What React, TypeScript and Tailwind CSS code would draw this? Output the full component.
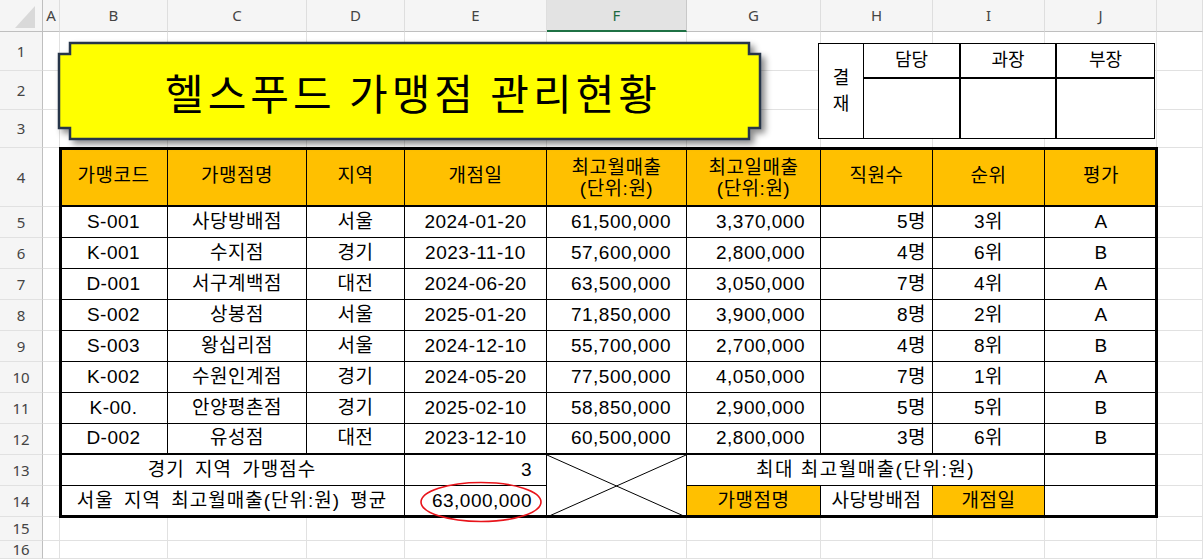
const cellFont = "font-['Liberation_Sans','Noto_Sans_CJK_KR',sans-serif]";
const krFont = "font-['Noto_Sans_CJK_KR',sans-serif]";
const uiFont = "font-['Noto_Sans','Liberation_Sans',sans-serif]";

const colStarts = [
  "col-start-1", "col-start-2", "col-start-3", "col-start-4", "col-start-5", "col-start-6",
  "col-start-7", "col-start-8", "col-start-9", "col-start-10", "col-start-11", "col-start-12",
];
const rowStarts = [
  "row-start-1", "row-start-2", "row-start-3", "row-start-4", "row-start-5", "row-start-6",
  "row-start-7", "row-start-8", "row-start-9", "row-start-10", "row-start-11", "row-start-12",
  "row-start-13", "row-start-14", "row-start-15", "row-start-16", "row-start-17",
];

const colLetters = ["A", "B", "C", "D", "E", "F", "G", "H", "I", "J", ""];
const rowNumbers = Array.from({ length: 16 }, (_, i) => i + 1);

const stores = [
  { code: "S-001", name: "사당방배점", region: "서울", opened: "2024-01-20", monthly: "61,500,000", daily: "3,370,000", staff: "5명", rank: "3위", grade: "A" },
  { code: "K-001", name: "수지점", region: "경기", opened: "2023-11-10", monthly: "57,600,000", daily: "2,800,000", staff: "4명", rank: "6위", grade: "B" },
  { code: "D-001", name: "서구계백점", region: "대전", opened: "2024-06-20", monthly: "63,500,000", daily: "3,050,000", staff: "7명", rank: "4위", grade: "A" },
  { code: "S-002", name: "상봉점", region: "서울", opened: "2025-01-20", monthly: "71,850,000", daily: "3,900,000", staff: "8명", rank: "2위", grade: "A" },
  { code: "S-003", name: "왕십리점", region: "서울", opened: "2024-12-10", monthly: "55,700,000", daily: "2,700,000", staff: "4명", rank: "8위", grade: "B" },
  { code: "K-002", name: "수원인계점", region: "경기", opened: "2024-05-20", monthly: "77,500,000", daily: "4,050,000", staff: "7명", rank: "1위", grade: "A" },
  { code: "K-00.", name: "안양평촌점", region: "경기", opened: "2025-02-10", monthly: "58,850,000", daily: "2,900,000", staff: "5명", rank: "5위", grade: "B" },
  { code: "D-002", name: "유성점", region: "대전", opened: "2023-12-10", monthly: "60,500,000", daily: "2,800,000", staff: "3명", rank: "6위", grade: "B" },
];

function StoreTable() {
  const last = stores.length - 1;
  return (
    <div
      className={`col-start-3 col-end-12 row-start-5 row-end-16 grid grid-cols-[108px_139px_98px_142px_140px_134px_112px_112px_112px] grid-rows-[59px_repeat(10,31px)] bg-white text-black text-[19px] tracking-[0.5px] outline-3 -outline-offset-2 outline-black ${cellFont}`}
    >
      {/* header */}
      {["가맹코드", "가맹점명", "지역", "개점일"].map((h) => (
        <div key={h} className="flex items-center justify-center bg-[#ffc000] border-r border-b-2 border-black">
          {h}
        </div>
      ))}
      {["최고월매출", "최고일매출"].map((h) => (
        <div key={h} className="flex flex-col items-center justify-center bg-[#ffc000] border-r border-b-2 border-black leading-[21px] pt-[2px]">
          <span>{h}</span>
          <span>(단위:원)</span>
        </div>
      ))}
      <div className="flex items-center justify-center bg-[#ffc000] border-r border-b-2 border-black">직원수</div>
      <div className="flex items-center justify-center bg-[#ffc000] border-r border-b-2 border-black">순위</div>
      <div className="flex items-center justify-center bg-[#ffc000] border-b-2 border-black">평가</div>

      {/* rows */}
      {stores.map((s, i) => {
        const b = i === last ? "border-b-2" : "border-b";
        return [
          <div key={s.code + i + "a"} className={`flex items-center justify-center border-r ${b} border-black`}>{s.code}</div>,
          <div key={s.code + i + "b"} className={`flex items-center justify-center border-r ${b} border-black`}>{s.name}</div>,
          <div key={s.code + i + "c"} className={`flex items-center justify-center border-r ${b} border-black`}>{s.region}</div>,
          <div key={s.code + i + "d"} className={`flex items-center justify-center border-r ${b} border-black`}>{s.opened}</div>,
          <div key={s.code + i + "e"} className={`flex items-center justify-end pr-[15px] border-r ${b} border-black`}>{s.monthly}</div>,
          <div key={s.code + i + "f"} className={`flex items-center justify-end pr-[15px] border-r ${b} border-black`}>{s.daily}</div>,
          <div key={s.code + i + "g"} className={`flex items-center justify-end pr-[6px] border-r ${b} border-black`}>{s.staff}</div>,
          <div key={s.code + i + "h"} className={`flex items-center justify-center border-r ${b} border-black`}>{s.rank}</div>,
          <div key={s.code + i + "i"} className={`flex items-center justify-center ${b} border-black`}>{s.grade}</div>,
        ];
      })}

      {/* row 13 */}
      <div className="col-span-3 flex items-center justify-center border-r border-b border-black tracking-[1px] [word-spacing:4px]">
        경기 지역 가맹점수
      </div>
      <div className="flex items-center justify-end pr-[14px] border-r border-b border-black">3</div>
      <div className="row-span-2 border-r border-black">
        <svg className="w-full h-full" viewBox="0 0 100 100" preserveAspectRatio="none">
          <line x1="0" y1="0" x2="100" y2="100" stroke="#000" strokeWidth="1" vectorEffect="non-scaling-stroke" />
          <line x1="0" y1="100" x2="100" y2="0" stroke="#000" strokeWidth="1" vectorEffect="non-scaling-stroke" />
        </svg>
      </div>
      <div className="col-span-3 flex items-center justify-center border-r border-b border-black tracking-[1.5px]">
        최대 최고월매출(단위:원)
      </div>
      <div className="border-b border-black" />

      {/* row 14 */}
      <div className="col-span-3 flex items-center justify-center border-r border-black tracking-[1px] [word-spacing:4px]">
        서울 지역 최고월매출(단위:원) 평균
      </div>
      <div className="relative flex items-center justify-end pr-[14px] border-r border-black">
        63,000,000
        <svg className="absolute left-0 top-0 overflow-visible pointer-events-none" width="142" height="31">
          <ellipse cx="76" cy="16" rx="60" ry="19.5" fill="none" stroke="#e8141b" strokeWidth="1.6" />
        </svg>
      </div>
      <div className="flex items-center justify-center bg-[#ffc000] border-r border-black">가맹점명</div>
      <div className="flex items-center justify-center border-r border-black">사당방배점</div>
      <div className="flex items-center justify-center bg-[#ffc000] border-r border-black">개점일</div>
      <div />
    </div>
  );
}

function TitleShape() {
  return (
    <div className="absolute left-[59px] top-[43px] w-[702px] h-[96px] flex items-center justify-center">
      <svg className="absolute left-[-4px] top-[-4px] overflow-visible" width="718" height="112">
        <defs>
          <filter id="shade" x="-5%" y="-20%" width="110%" height="150%">
            <feDropShadow dx="4" dy="4" stdDeviation="3" floodColor="#000" floodOpacity="0.45" />
          </filter>
        </defs>
        <path
          d="M15 4 H694 V15 H705 V89 H694 V100 H15 V89 H4 V15 H15 Z"
          fill="#ffff00"
          stroke="#263548"
          strokeWidth="2.5"
          filter="url(#shade)"
        />
      </svg>
      <span className={`relative text-[42px] leading-none text-black tracking-[4px] pl-[6px] pt-[2px] ${krFont}`}>
        헬스푸드 가맹점 관리현황
      </span>
    </div>
  );
}

function ApprovalBox() {
  return (
    <div
      className={`absolute left-[818px] top-[43px] w-[337px] h-[96px] grid grid-cols-[45px_97px_96px_97px] grid-rows-[35px_59px] border border-black bg-white text-[18px] text-black ${cellFont}`}
    >
      <div className="row-span-2 flex flex-col items-center justify-center border-r border-black leading-[26px]">
        <span>결</span>
        <span>재</span>
      </div>
      <div className="flex items-center justify-center border-r-2 border-b-2 border-black">담당</div>
      <div className="flex items-center justify-center border-r-2 border-b-2 border-black">과장</div>
      <div className="flex items-center justify-center border-b-2 border-black">부장</div>
      <div className="border-r-2 border-black" />
      <div className="border-r-2 border-black" />
      <div />
    </div>
  );
}

export default function App() {
  return (
    <div className="w-[1203px] h-[559px] overflow-hidden bg-white">
      <div className="relative grid grid-cols-[43px_17px_108px_139px_98px_142px_140px_134px_112px_112px_112px_46px] grid-rows-[32px_39px_39px_38px_59px_repeat(10,31px)_24px_18px]">
        {/* corner */}
        <div className="col-start-1 row-start-1 flex items-end justify-end pr-[7px] pb-[3px] bg-[#f5f5f5] border-r border-b border-[#bfbfbf]">
          <svg width="20" height="22" viewBox="0 0 20 22">
            <path d="M0 22 L20 22 L20 0 Z" fill="#d9d9d9" />
          </svg>
        </div>

        {/* column letters */}
        {colLetters.map((l, i) => (
          <div
            key={"c" + i}
            className={`${colStarts[i + 1]} row-start-1 flex items-center justify-center text-[15px] ${uiFont} ${
              l === "F"
                ? "bg-[#e3e3e3] text-[#1d6b3f] border-r border-[#c8c8c8] border-b-2 border-b-[#1e7145]"
                : "bg-[#f5f5f5] text-[#444] border-r border-[#dedede] border-b border-b-[#bfbfbf]"
            }`}
          >
            {l}
          </div>
        ))}

        {/* row numbers */}
        {rowNumbers.map((n) => (
          <div
            key={"r" + n}
            className={`col-start-1 ${rowStarts[n]} flex items-center justify-center bg-[#f5f5f5] text-[15px] leading-none text-[#444] border-r border-r-[#bfbfbf] border-b border-b-[#e1e1e1] ${uiFont}`}
          >
            {n}
          </div>
        ))}

        {/* gridlines */}
        {rowNumbers.map((n) =>
          colLetters.map((_, c) => (
            <div key={n + "-" + c} className={`${colStarts[c + 1]} ${rowStarts[n]} border-r border-b border-[#e1e1e1]`} />
          ))
        )}

        <StoreTable />
        <TitleShape />
        <ApprovalBox />
      </div>
    </div>
  );
}
